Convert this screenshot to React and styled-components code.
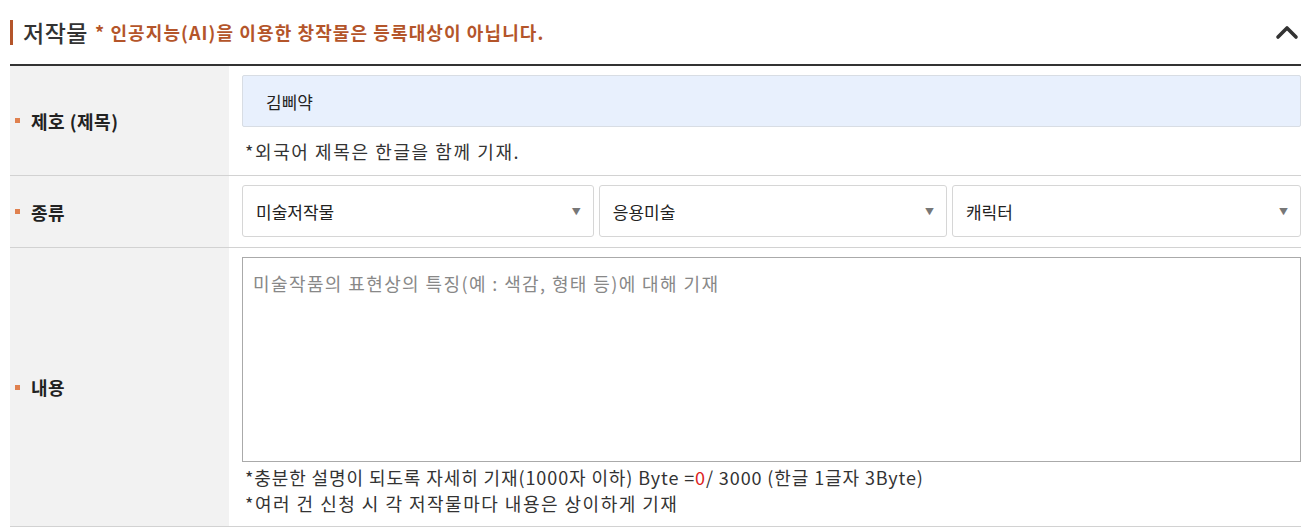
import React from 'react'
import styled, {createGlobalStyle} from 'styled-components'

const GlobalStyle=createGlobalStyle`
body{
    margin:0;
    background:#fff;
    font-family:"Noto Sans CJK KR","Noto Sans",sans-serif;
    color:#333;
}
`

const Section=styled.section`
padding:0 12px 0 10px;
`
const Header=styled.div`
display:flex;
align-items:center;
justify-content:space-between;
height:64px;
border-bottom:2px solid #333;
`
const Title=styled.h2`
display:flex;
align-items:center;
margin:0;
padding-left:10px;
border-left:3px solid #b4552a;
height:25px;
font-size:23px;
font-weight:500;
letter-spacing:0.5px;
color:#333;
`
const Notice=styled.span`
margin-left:7px;
font-size:18px;
font-weight:700;
color:#b4552a;
letter-spacing:1.1px;
`
const Toggle=styled.button`
border:none;
background:none;
padding:0;
margin-right:2px;
display:flex;
cursor:pointer;
`
const Row=styled.div`
display:flex;
border-bottom:1px solid #d2d2d2;
min-height:${p=>p.h}px;
`
const Label=styled.div`
width:219px;
flex:none;
background:#f2f2f2;
display:flex;
align-items:center;
padding-left:5px;
box-sizing:border-box;
font-size:18px;
font-weight:700;
letter-spacing:0.5px;
color:#222;
&::before{
    content:"";
    width:5px;
    height:5px;
    background:#e0814f;
    margin-right:11px;
}
`
const Cell=styled.div`
flex:1;
padding:9px 0 0 13px;
display:flex;
flex-direction:column;
`
const TextInput=styled.div`
height:52px;
box-sizing:border-box;
border:1px solid #d8dde4;
background:#e8f0fd;
border-radius:2px;
padding-left:23px;
display:flex;
align-items:center;
font-size:17px;
color:#222;
`
const Help=styled.p`
margin:0;
font-size:18px;
line-height:26px;
color:#333;
letter-spacing:${p=>p.ls||1}px;
padding-left:3px;
`
const Selects=styled.div`
display:flex;
gap:5px;
`
const Select=styled.div`
flex:${p=>p.grow};
height:52px;
box-sizing:border-box;
border:1px solid #d6d6d6;
border-radius:3px;
display:flex;
align-items:center;
justify-content:space-between;
padding:0 12px 0 13px;
font-size:17px;
color:#222;
&::after{
    content:"▼";
    font-size:9px;
    color:#777;
}
`
const TextArea=styled.div`
height:205px;
box-sizing:border-box;
border:1px solid #aaa;
padding:13px 10px;
font-size:18px;
line-height:24px;
color:#888;
letter-spacing:1.4px;
margin-bottom:2px;
`
const Red=styled.span`
color:#d22;
`

export default function App(){
    return(
        <>
        <GlobalStyle/>
        <Section>
            <Header>
                <Title>저작물<Notice>* 인공지능(AI)을 이용한 창작물은 등록대상이 아닙니다.</Notice></Title>
                <Toggle>
                    <svg width="24" height="16" viewBox="0 0 24 16">
                        <path d="M3 13 L12 4 L21 13" fill="none" stroke="#333" strokeWidth="3.6" strokeLinecap="round" strokeLinejoin="round"/>
                    </svg>
                </Toggle>
            </Header>
            <Row h={109}>
                <Label>제호 (제목)</Label>
                <Cell>
                    <TextInput>김삐약</TextInput>
                    <Help ls={1.6} style={{marginTop:11}}>*외국어 제목은 한글을 함께 기재.</Help>
                </Cell>
            </Row>
            <Row h={71}>
                <Label>종류</Label>
                <Cell>
                    <Selects>
                        <Select grow={352}>미술저작물</Select>
                        <Select grow={348}>응용미술</Select>
                        <Select grow={349}>캐릭터</Select>
                    </Selects>
                </Cell>
            </Row>
            <Row h={278}>
                <Label>내용</Label>
                <Cell>
                    <TextArea>미술작품의 표현상의 특징(예 : 색감, 형태 등)에 대해 기재</TextArea>
                    <Help ls={0.9}>*충분한 설명이 되도록 자세히 기재(1000자 이하) Byte =<Red>0</Red>/ 3000 (한글 1글자 3Byte)</Help>
                    <Help ls={1.5}>*여러 건 신청 시 각 저작물마다 내용은 상이하게 기재</Help>
                </Cell>
            </Row>
        </Section>
        </>
    )
}
